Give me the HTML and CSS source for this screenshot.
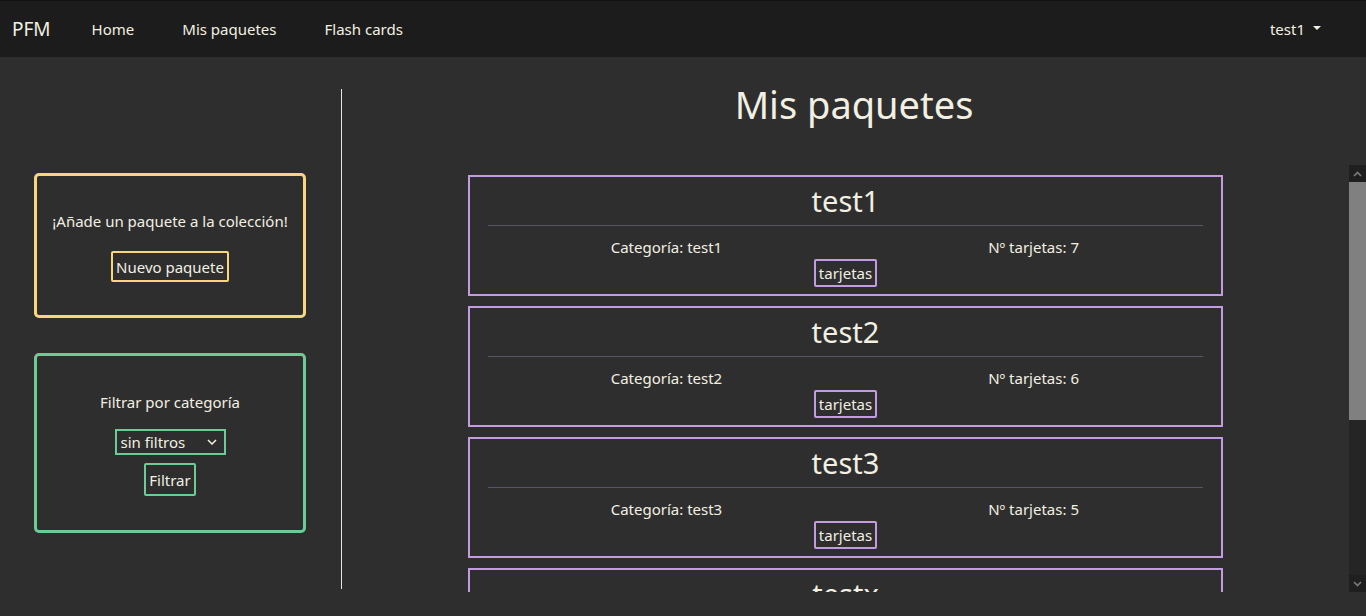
FILE: index.html
```html
<!DOCTYPE html>
<html lang="es">
<head>
<meta charset="utf-8">
<title>Mis paquetes</title>
<link rel="stylesheet" href="styles.css">
</head>
<body>
<nav class="navbar">
  <a class="brand" href="#">PFM</a>
  <ul class="nav-links">
    <li><a href="#">Home</a></li>
    <li><a href="#">Mis paquetes</a></li>
    <li><a href="#">Flash cards</a></li>
  </ul>
  <a class="user" href="#">test1 <span class="caret"></span></a>
</nav>
<main class="main">
  <aside class="side">
    <section class="box box-yellow">
      <p class="box-text">¡Añade un paquete a la colección!</p>
      <button class="btn btn-yellow">Nuevo paquete</button>
    </section>
    <section class="box box-green">
      <p class="box-text">Filtrar por categoría</p>
      <div class="select-wrap">
        <select class="select">
          <option>sin filtros</option>
        </select>
        <svg class="chev" width="10" height="6" viewBox="0 0 10 6"><path d="M1 1l4 4 4-4" fill="none" stroke="#f0efe2" stroke-width="1.5"/></svg>
      </div>
      <button class="btn btn-green">Filtrar</button>
    </section>
  </aside>
  <div class="divider"></div>
  <section class="content">
    <h1 class="title">Mis paquetes</h1>
    <div class="list-frame">
      <div class="list">
        <article class="card">
          <h2 class="card-title">test1</h2>
          <hr class="card-hr">
          <div class="card-row"><span>Categoría: test1</span><span>Nº tarjetas: 7</span></div>
          <button class="btn btn-purple">tarjetas</button>
        </article>
        <article class="card">
          <h2 class="card-title">test2</h2>
          <hr class="card-hr">
          <div class="card-row"><span>Categoría: test2</span><span>Nº tarjetas: 6</span></div>
          <button class="btn btn-purple">tarjetas</button>
        </article>
        <article class="card">
          <h2 class="card-title">test3</h2>
          <hr class="card-hr">
          <div class="card-row"><span>Categoría: test3</span><span>Nº tarjetas: 5</span></div>
          <button class="btn btn-purple">tarjetas</button>
        </article>
        <article class="card">
          <h2 class="card-title">testx</h2>
          <hr class="card-hr">
          <div class="card-row"><span>Categoría: testx</span><span>Nº tarjetas: 3</span></div>
          <button class="btn btn-purple">tarjetas</button>
        </article>
      </div>
      <div class="scrollbar" aria-hidden="true">
        <div class="sb-btn">
          <svg width="9" height="6" viewBox="0 0 9 6"><path d="M1 5l3.5-3.5L8 5" fill="none" stroke="#7a7a7a" stroke-width="1.6"/></svg>
        </div>
        <div class="sb-track"><div class="sb-thumb"></div></div>
        <div class="sb-btn">
          <svg width="9" height="6" viewBox="0 0 9 6"><path d="M1 1l3.5 3.5L8 1" fill="none" stroke="#7a7a7a" stroke-width="1.6"/></svg>
        </div>
      </div>
    </div>
  </section>
</main>
</body>
</html>
```
FILE: styles.css
```css
* { box-sizing: border-box; }
html, body { height: 100%; }
body {
  margin: 0;
  background: #2e2e2e;
  color: #f2f0e2;
  font-family: "Noto Sans", "Open Sans", sans-serif;
  font-size: 15px;
  overflow: hidden;
}
a { color: inherit; text-decoration: none; }

.navbar {
  height: 57px;
  background: #1c1c1c;
  border-top: 1px solid #111;
  display: flex;
  align-items: center;
  padding: 0 45px 0 12px;
}
.brand { font-size: 19px; margin-right: 17px; }
.nav-links { list-style: none; margin: 0; padding: 0; display: flex; }
.nav-links a { display: block; padding: 0 24px; font-size: 15px; }
.user { margin-left: auto; font-size: 15px; display: flex; align-items: center; gap: 8px; }
.caret {
  width: 0; height: 0;
  border-left: 4px solid transparent;
  border-right: 4px solid transparent;
  border-top: 4px solid #f2f0e2;
  margin-top: -3px;
}

.main { display: flex; height: 559px; }
.side {
  width: 341px;
  padding: 116px 35px 0 34px;
  display: flex;
  flex-direction: column;
  gap: 35px;
}
.box {
  border: 3px solid;
  border-radius: 5px;
  display: flex;
  flex-direction: column;
  align-items: center;
}
.box-yellow { border-color: #f9d57c; padding: 33px 0; }
.box-green { border-color: #6dcb95; padding: 34px 0; }
.box-text { margin: 0; line-height: 24px; }
.box-yellow .box-text { margin-bottom: 18px; }
.box-green .box-text { margin-bottom: 15px; }

.btn {
  background: transparent;
  color: #f2f0e2;
  font-family: inherit;
  font-size: 15px;
  border: 2px solid;
  border-radius: 2px;
  padding: 0 3px;
  cursor: pointer;
}
.btn-yellow { border-color: #f9d57c; height: 31px; }
.btn-green { border-color: #6dcb95; height: 33px; }
.btn-purple { border-color: #c39be0; height: 28px; }

.select-wrap { position: relative; margin-bottom: 8px; }
.select {
  appearance: none;
  -webkit-appearance: none;
  width: 111px;
  height: 26px;
  background: #2e2e2e;
  color: #f2f0e2;
  border: 2px solid #6dcb95;
  border-radius: 0;
  font-family: inherit;
  font-size: 15px;
  padding: 0 0 0 4px;
  outline: none;
}
.chev { position: absolute; right: 9px; top: 10px; pointer-events: none; }

.divider {
  width: 1px;
  background: #e8e6da;
  margin: 32px 0 27px;
}

.content { flex: 1; display: flex; flex-direction: column; min-width: 0; }
.title {
  margin: 23px 0 37px;
  text-align: center;
  font-size: 38px;
  font-weight: 400;
  line-height: 48px;
}
.list-frame { height: 427px; display: flex; }
.list {
  flex: 1;
  min-width: 0;
  overflow: hidden;
  padding: 10px 0 0;
  display: flex;
  flex-direction: column;
  gap: 10px;
}
.scrollbar {
  width: 17px;
  display: flex;
  flex-direction: column;
  background: #252525;
}
.sb-btn {
  height: 17px;
  background: #1f1f1f;
  display: flex;
  align-items: center;
  justify-content: center;
}
.sb-track { flex: 1; }
.sb-thumb { height: 238px; background: #808080; }

.card {
  width: 75%;
  margin: 0 auto;
  flex: none;
  border: 2px solid #c39be0;
  padding: 6px 4px 7px;
  display: flex;
  flex-direction: column;
  align-items: center;
}
.card-title {
  margin: 0;
  font-size: 29px;
  font-weight: 400;
  line-height: 36px;
}
.card-hr {
  width: 96.3%;
  border: 0;
  border-top: 1px solid #5b5466;
  margin: 6px 0 9px;
}
.card-row { width: 100%; display: flex; line-height: 24px; padding-left: 9px; }
.card-row span { flex: 1; text-align: center; }
```
